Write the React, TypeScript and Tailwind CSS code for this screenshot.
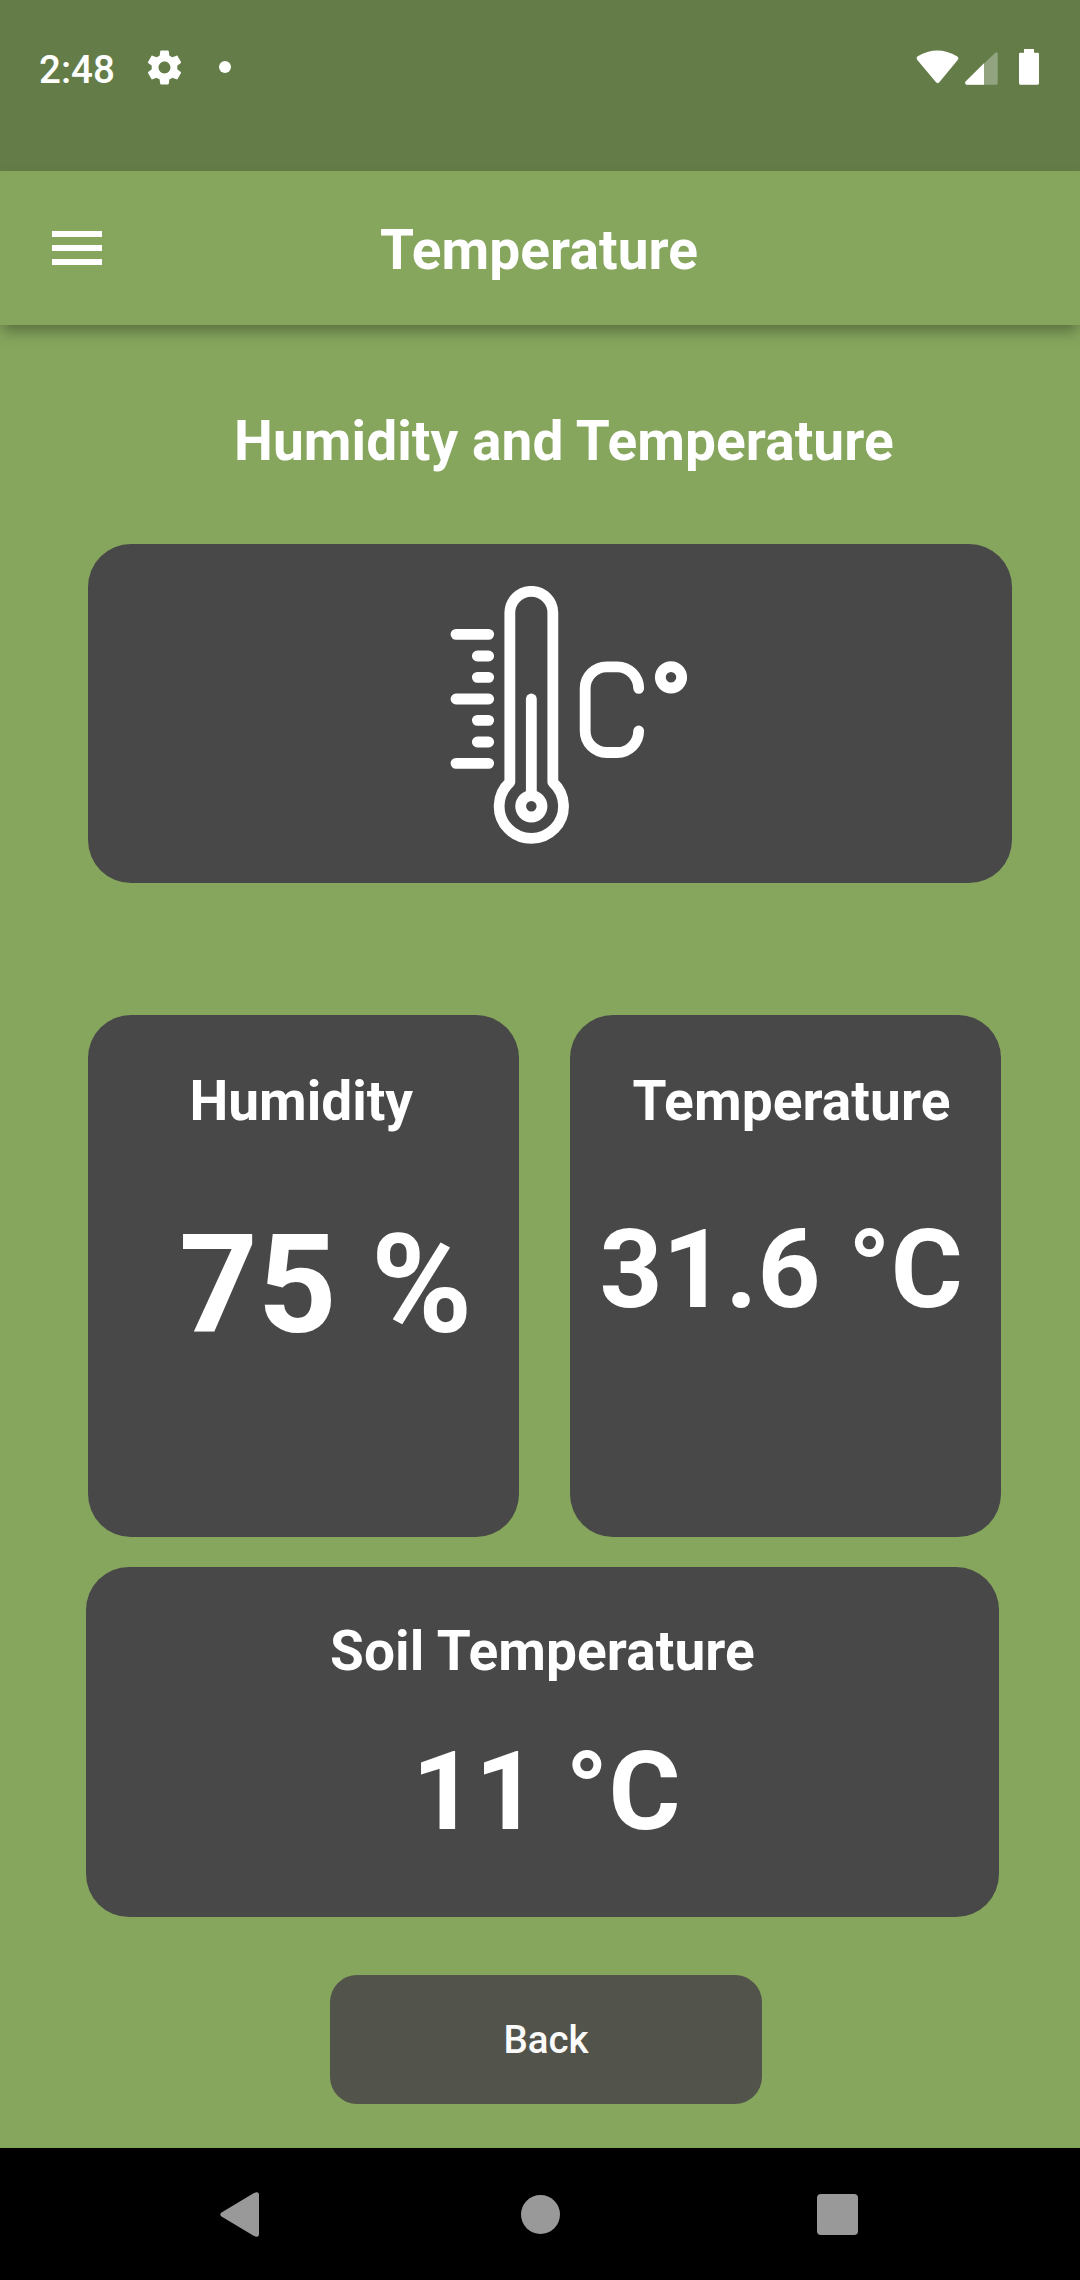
import React from "react";

function SettingsIcon() {
  return (
    <svg className="mb-[3px] ml-[29px] size-[41px] shrink-0" viewBox="0 0 24 24" fill="currentColor">
      <path d="M19.43 12.98c.04-.32.07-.64.07-.98s-.03-.66-.07-.98l2.11-1.65c.19-.15.24-.42.12-.64l-2-3.46c-.12-.22-.39-.3-.61-.22l-2.490 1c-.52-.4-1.080-.73-1.690-.98l-.38-2.650C14.460 2.180 14.250 2 14 2h-4c-.25 0-.46.18-.49.42l-.38 2.650c-.61.25-1.170.59-1.690.98l-2.490-1c-.23-.09-.49 0-.61.22l-2 3.460c-.13.22-.07.49.12.64l2.110 1.650c-.04.32-.07.65-.07.98s.03.66.07.98l-2.110 1.650c-.19.15-.24.42-.12.64l2 3.460c.12.22.39.3.61.22l2.490-1c.52.4 1.080.73 1.690.98l.38 2.650c.03.24.24.42.49.42h4c.25 0 .46-.18.49-.42l.38-2.650c.61-.25 1.170-.59 1.690-.98l2.490 1c.23.09.49 0 .61-.22l2-3.460c.12-.22.07-.49-.12-.64l-2.110-1.650zM12 15.500c-1.930 0-3.500-1.570-3.500-3.500s1.570-3.500 3.500-3.500 3.500 1.570 3.500 3.500-1.570 3.500-3.500 3.500z" />
    </svg>
  );
}

function StatusBar() {
  return (
    <div className="flex h-[171px] items-start bg-[#647d48]">
      <div className="flex h-[137px] w-full items-center">
        <span className="mt-[2px] ml-[39px] w-[76px] text-[38.5px] leading-[48px] font-medium whitespace-nowrap">2:48</span>
        <SettingsIcon />
        <span className="mb-[3px] ml-[34px] size-[12px] rounded-full bg-white" />
        <svg className="mb-[3px] ml-auto h-[36px] w-[123px]" viewBox="0 0 369 108" fill="currentColor">
          <path d="M4 33 Q-1 27 5 22 Q64 -13 123 22 Q130 27 125 33 L70 100 Q65 105 60 100 Z" />
          <path d="M150 107 Q144 101 150 95 L238 11 Q245 7 245 13 V103 Q245 107 241 107 Z" opacity="0.3" />
          <path d="M151 107 Q144 103 150 97 L204 43 V107 Z" />
          <path d="M324 0 H354 V11 H365 Q369 11 369 15 V103 Q369 107 365 107 H313 Q309 107 309 103 V15 Q309 11 313 11 H324 Z" />
        </svg>
        <span className="w-[41px] shrink-0" />
      </div>
    </div>
  );
}

function Header() {
  return (
    <header className="relative flex h-[154px] items-start bg-[#86a65d] shadow-[0_8px_14px_-2px_rgba(0,0,0,0.34)]">
      <button aria-label="Open menu" className="mt-[60px] ml-[52px] flex w-[50px] flex-col gap-[8px]">
        <span className="h-[6px] bg-white" />
        <span className="h-[6px] bg-white" />
        <span className="h-[6px] bg-white" />
      </button>
      <h1 className="mt-[47px] ml-[278px] text-[55px] leading-[64px] font-bold tracking-[0.1px]">Temperature</h1>
    </header>
  );
}

function ThermometerIcon() {
  return (
    <svg className="h-[258px] w-[238px]" viewBox="60 78 714 774" fill="none" stroke="currentColor" strokeWidth="32.5" strokeLinecap="round" strokeLinejoin="round">
      <path d="M239.500 667 V158.500 A64.500 64.500 0 0 1 368.500 158.500 V667 A96.500 96.500 0 1 1 239.500 667 Z" />
      <path d="M304 417 V706" />
      <circle cx="304" cy="739" r="32" />
      <path d="M78 223 H176 M78 417 H176 M78 610 H176 M142 288 H176 M142 352 H176 M142 481 H176 M142 546 H176" />
      <path d="M626 385 A64 65 0 0 0 562 320.500 H530 A64.500 64.500 0 0 0 465.500 385 V513 A64.500 64.500 0 0 0 530 577.500 H562 A64 65 0 0 0 626 513" />
      <circle cx="723" cy="352" r="32" />
    </svg>
  );
}

function NavigationBar() {
  return (
    <nav className="flex h-[132px] items-start bg-black text-[#999999]">
      <svg className="mt-[44px] ml-[220px] h-[45px] w-[39px]" viewBox="0 0 39 45" fill="currentColor">
        <path d="M1.500 20.500 L34 1 Q39 -1 39 3 V42 Q39 46 34 44 L1.500 24.500 Q-1 22.500 1.500 20.500 Z" />
      </svg>
      <span className="mt-[47px] ml-[262px] size-[39px] rounded-full bg-[#999999]" />
      <span className="mt-[46px] ml-[257px] size-[41px] rounded-[4px] bg-[#999999]" />
    </nav>
  );
}

export default function App() {
  return (
    <div className="flex h-[2280px] w-[1080px] flex-col overflow-hidden bg-[#86a65d] font-['Roboto',sans-serif] text-white">
      <StatusBar />
      <Header />
      <main className="flex flex-1 flex-col">
        <h2 className="mt-[84px] ml-[234px] text-[55px] leading-[64px] font-bold tracking-[0.08px] whitespace-nowrap">Humidity and Temperature</h2>

        <section className="mt-[70.5px] ml-[88.4px] flex h-[339.5px] w-[923.5px] rounded-[43px] bg-[#484848] pt-[42.500px] pl-[361.500px]">
          <ThermometerIcon />
        </section>

        <div className="mt-[132px] ml-[88.4px] flex gap-[51px]">
          <section className="h-[522px] w-[431px] rounded-[43px] bg-[#484848] pt-[54px] whitespace-nowrap">
            <h3 className="pl-[101px] text-[55px] leading-[64px] font-bold">Humidity</h3>
            <p className="mt-[72px] pl-[90.5px] text-[137.5px] leading-[160px] font-bold">75 %</p>
          </section>
          <section className="h-[522px] w-[431px] rounded-[43px] bg-[#484848] pt-[54px] whitespace-nowrap">
            <h3 className="pl-[62px] text-[55px] leading-[64px] font-bold tracking-[0.1px]">Temperature</h3>
            <p className="mt-[73px] pl-[29px] text-[110px] leading-[128px] font-bold">31.6 °C</p>
          </section>
        </div>

        <section className="mt-[29.5px] ml-[86px] h-[350.5px] w-[913px] rounded-[43px] bg-[#484848] pt-[52.500px] whitespace-nowrap">
          <h3 className="pl-[244px] text-[55px] leading-[64px] font-bold tracking-[0.1px]">Soil Temperature</h3>
          <p className="mt-[45px] pl-[326px] text-[110px] leading-[128px] font-bold">11 °C</p>
        </section>

        <button className="mt-[58px] ml-[330px] flex h-[129px] w-[432px] items-center justify-center rounded-[27px] bg-[#52534a] text-[38.5px] font-medium text-[#fafafa]">
          Back
        </button>
      </main>
      <NavigationBar />
    </div>
  );
}
